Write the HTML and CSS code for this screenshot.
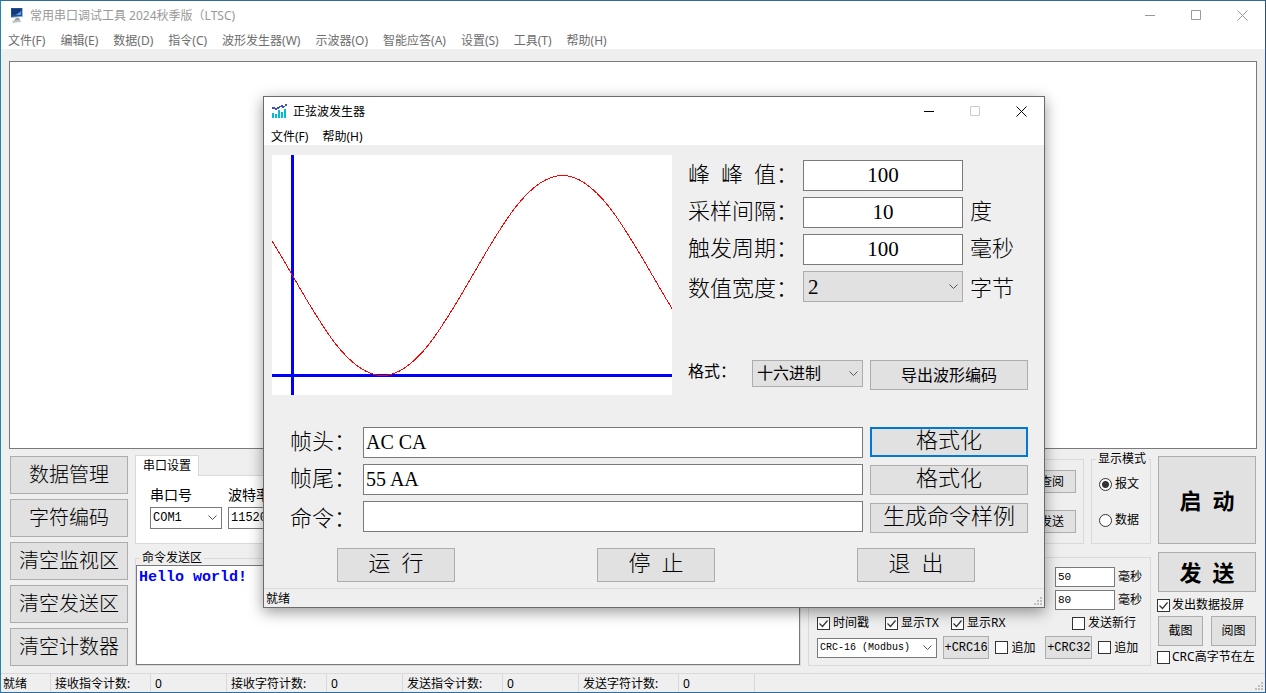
FILE: index.html
```html
<!DOCTYPE html>
<html lang="zh-CN">
<head>
<meta charset="utf-8">
<title>常用串口调试工具</title>
<link rel="stylesheet" href="styles.css">
</head>
<body>
<div class="window">
  <header class="titlebar inactive">
    <svg class="app-icon" width="16" height="16" viewBox="0 0 16 16" aria-hidden="true">
      <path d="M2 0h12v9l-12 1z" fill="#a9bdd2"/>
      <path d="M2 0h11v8l-11 1z" fill="#1f4f96"/>
      <path d="M3 1h9v3l-9 3z" fill="#123a78"/>
      <path d="M7 7l5-4v4z" fill="#5d9be0"/>
      <path d="M7 10h3l2 4H4z" fill="#9aa0a4"/>
      <path d="M3 13l8-1 1 2-8 1z" fill="#c4c8cb"/>
    </svg>
    <h1 class="title">常用串口调试工具 2024秋季版（LTSC)</h1>
    <div class="caption-buttons">
      <button type="button" aria-label="最小化"><svg width="11" height="11" viewBox="0 0 11 11"><path d="M0 5.5h10"/></svg></button>
      <button type="button" aria-label="最大化"><svg width="11" height="11" viewBox="0 0 11 11"><path d="M.5 .5h9v9h-9z"/></svg></button>
      <button type="button" aria-label="关闭"><svg width="11" height="11" viewBox="0 0 11 11"><path d="M.5 .5l10 10M10.500 .5l-10 10"/></svg></button>
    </div>
  </header>
  <nav class="menubar inactive">
    <button type="button">文件(F)</button>
    <button type="button">编辑(E)</button>
    <button type="button">数据(D)</button>
    <button type="button">指令(C)</button>
    <button type="button">波形发生器(W)</button>
    <button type="button">示波器(O)</button>
    <button type="button">智能应答(A)</button>
    <button type="button">设置(S)</button>
    <button type="button">工具(T)</button>
    <button type="button">帮助(H)</button>
  </nav>

  <main class="workspace">
    <div class="monitor"></div>
    <div class="controls">
      <div class="tools">
        <button type="button" class="btn">数据管理</button>
        <button type="button" class="btn">字符编码</button>
        <button type="button" class="btn">清空监视区</button>
        <button type="button" class="btn">清空发送区</button>
        <button type="button" class="btn">清空计数器</button>
      </div>

      <div class="center">
        <div class="center-row">
          <section class="tabs">
            <button type="button" class="tab">串口设置</button>
            <div class="tab-page">
              <div class="field">
                <label for="port">串口号</label>
                <select id="port" class="port"><option>COM1</option></select>
              </div>
              <div class="field">
                <label for="baud">波特率</label>
                <select id="baud" class="port"><option>115200</option></select>
              </div>
            </div>
          </section>
          <fieldset class="group quick">
            <button type="button" class="btn small">查阅</button>
            <button type="button" class="btn small">发送</button>
          </fieldset>
          <fieldset class="group mode">
            <legend>显示模式</legend>
            <label class="check"><input type="radio" name="mode" checked>报文</label>
            <label class="check"><input type="radio" name="mode">数据</label>
          </fieldset>
        </div>

        <div class="center-row">
          <fieldset class="group send">
            <legend>命令发送区</legend>
            <textarea aria-label="命令发送区">Hello world!</textarea>
          </fieldset>
          <fieldset class="group options">
            <div class="delays">
              <label class="delay"><input type="text" value="50">毫秒</label>
              <label class="delay"><input type="text" value="80">毫秒</label>
            </div>
            <div class="flags">
              <label class="check"><input type="checkbox" checked>时间戳</label>
              <label class="check"><input type="checkbox" checked>显示TX</label>
              <label class="check"><input type="checkbox" checked>显示RX</label>
              <label class="check newline"><input type="checkbox">发送新行</label>
            </div>
            <div class="crc">
              <select class="crc-kind" aria-label="校验方式"><option>CRC-16 (Modbus)</option></select>
              <button type="button" class="btn mono">+CRC16</button>
              <label class="check"><input type="checkbox">追加</label>
              <button type="button" class="btn mono">+CRC32</button>
              <label class="check"><input type="checkbox">追加</label>
            </div>
          </fieldset>
        </div>
      </div>

      <div class="actions">
        <button type="button" class="btn strong start">启  动</button>
        <button type="button" class="btn strong">发  送</button>
        <label class="check"><input type="checkbox" checked>发出数据投屏</label>
        <div class="shots">
          <button type="button" class="btn">截图</button>
          <button type="button" class="btn">阅图</button>
        </div>
        <label class="check"><input type="checkbox">CRC高字节在左</label>
      </div>
    </div>
  </main>

  <footer class="statusbar">
    <span class="cell ready">就绪</span>
    <span class="cell name">接收指令计数:</span><span class="cell count">0</span>
    <span class="cell name">接收字符计数:</span><span class="cell count">0</span>
    <span class="cell name">发送指令计数:</span><span class="cell count">0</span>
    <span class="cell name">发送字符计数:</span><span class="cell count">0</span>
    <svg class="grip" width="10" height="10" viewBox="0 0 10 10" aria-hidden="true"><path d="M6 0h2v2h-2zM3 3h2v2h-2zM6 3h2v2h-2zM0 6h2v2h-2zM3 6h2v2h-2zM6 6h2v2h-2z"/></svg>
  </footer>
</div>

<section class="dialog" role="dialog" aria-labelledby="dialog-title">
  <header class="titlebar">
    <svg class="app-icon" width="16" height="16" viewBox="0 0 16 16" aria-hidden="true" shape-rendering="crispEdges">
      <path d="M0 3h3v1h2V3h2V2h2V1h2v1h2V0h2v2h-2v1h-1v1h-2V3h-2v1H7v1H5v1H3V5H0z" fill="#3f51b5"/>
      <path d="M0 9h2v5h-2zM3 10h2v4h-2zM6 6h2v8h-2zM9 8h2v6h-2zM12 5h2v9h-2z" fill="#00bcd4"/>
    </svg>
    <h2 class="title" id="dialog-title">正弦波发生器</h2>
    <div class="caption-buttons">
      <button type="button" aria-label="最小化"><svg width="11" height="11" viewBox="0 0 11 11"><path d="M0 5.5h10"/></svg></button>
      <button type="button" aria-label="最大化" disabled><svg width="11" height="11" viewBox="0 0 11 11"><path d="M.5 .5h9v9h-9z"/></svg></button>
      <button type="button" aria-label="关闭"><svg width="11" height="11" viewBox="0 0 11 11"><path d="M.5 .5l10 10M10.500 .5l-10 10"/></svg></button>
    </div>
  </header>
  <nav class="menubar">
    <button type="button">文件(F)</button>
    <button type="button">帮助(H)</button>
  </nav>

  <div class="dialog-body">
    <div class="wave-row">
      <svg class="plot" width="400" height="240" viewBox="0 0 400 240" role="img" aria-label="波形">
        <path d="M19 0h3v240h-3zM0 219h400v3H0z" fill="#0000ff"/>
        <path class="curve" d="M-70 20.500C-37.400 20.500 -9 69 20.500 120.500C49.800 171.700 77.900 220.500 110.500 220.500C143 220.500 171 171.700 200.500 120.500C229.800 69.300 257.900 20.500 290.500 20.500C323 20.500 351 69.300 380.500 120.500C409.800 171.700 437.900 220.500 470.500 220.500"/>
      </svg>
      <div class="wave-settings">
        <div class="param"><label for="peak">峰  峰  值：</label><input id="peak" type="text" value="100"></div>
        <div class="param"><label for="step">采样间隔：</label><input id="step" type="text" value="10"><span>度</span></div>
        <div class="param"><label for="period">触发周期：</label><input id="period" type="text" value="100"><span>毫秒</span></div>
        <div class="param last"><label for="width">数值宽度：</label><select id="width"><option>2</option></select><span>字节</span></div>
        <div class="format">
          <label for="format">格式：</label>
          <select id="format"><option>十六进制</option></select>
          <button type="button" class="btn">导出波形编码</button>
        </div>
      </div>
    </div>

    <div class="frames">
      <div class="frame-fields">
        <div class="frame"><label for="head">帧头：</label><input id="head" type="text" value="AC CA"></div>
        <div class="frame"><label for="tail">帧尾：</label><input id="tail" type="text" value="55 AA"></div>
        <div class="frame last"><label for="cmd">命令：</label><input id="cmd" type="text" value=""></div>
      </div>
      <div class="frame-buttons">
        <button type="button" class="btn focused">格式化</button>
        <button type="button" class="btn">格式化</button>
        <button type="button" class="btn">生成命令样例</button>
      </div>
    </div>

    <div class="run-row">
      <button type="button" class="btn">运  行</button>
      <button type="button" class="btn">停  止</button>
      <button type="button" class="btn">退  出</button>
    </div>
  </div>

  <footer class="statusbar">
    <span class="cell">就绪</span>
    <svg class="grip" width="10" height="10" viewBox="0 0 10 10" aria-hidden="true"><path d="M6 0h2v2h-2zM3 3h2v2h-2zM6 3h2v2h-2zM0 6h2v2h-2zM3 6h2v2h-2zM6 6h2v2h-2z"/></svg>
  </footer>
</section>
</body>
</html>
```

FILE: styles.css
```css
* { box-sizing: border-box; }

:root {
  --face: #efefef;
  --button: #e1e1e1;
  --edge: #adadad;
  --field-edge: #7a7a7a;
  --line: #d9d9d9;
  --ui: "Noto Sans", "Noto Sans CJK SC", sans-serif;
  --form: "Liberation Serif", "Noto Sans CJK SC", serif;
  --mono: "Liberation Mono", "Noto Sans CJK SC", monospace;
}

body {
  margin: 0;
  color: #000;
  font: 12px/14px var(--ui);
  white-space: nowrap;
}

button, input, select, textarea {
  margin: 0;
  border-radius: 0;
  color: inherit;
  font: inherit;
}

.window {
  display: flex;
  flex-direction: column;
  height: 100vh;
  min-height: 600px;
  border: 1px solid;
  border-color: #2c6c9f #2d4f8e #2c6c9f #2784a8;
  background: var(--face);
}

/* Title bars and menus */
.titlebar {
  display: flex;
  align-items: center;
  gap: 5px;
  height: 29px;
  padding-left: 8px;
  background: #fff;
}
.title { flex: 1; margin: 0; font-size: 12px; font-weight: 400; }
.titlebar.inactive { color: #999; }
.caption-buttons { display: flex; }
.caption-buttons button {
  display: grid;
  place-items: center;
  width: 46px;
  height: 29px;
  padding: 0;
  border: 0;
  background: none;
}
.caption-buttons button:disabled { color: #ccc; }
.caption-buttons svg { fill: none; stroke: currentColor; }

.menubar {
  display: flex;
  gap: 14px;
  height: 19px;
  padding-left: 7px;
  background: #fff;
}
.menubar.inactive { gap: 15px; color: #6d6d6d; }
.menubar button { padding: 3px 0 0; border: 0; background: none; }

/* Shared controls */
.btn {
  padding: 0;
  border: 1px solid var(--edge);
  background: var(--button);
  text-align: center;
  white-space: pre;
}
.btn.focused { border: 2px solid #0078d7; }

input[type="text"], textarea {
  min-width: 0;
  padding: 0 2px;
  border: 1px solid var(--field-edge);
  background: #fff;
  outline: 0;
}

select {
  appearance: none;
  padding: 0 16px 0 2px;
  border: 1px solid var(--field-edge);
  background: #fff url("data:image/svg+xml,%3Csvg xmlns='http://www.w3.org/2000/svg' width='9' height='6'%3E%3Cpath d='M.5.5l4 4 4-4' fill='none' stroke='%23555'/%3E%3C/svg%3E") no-repeat right 4px center;
}

.check { display: flex; align-items: center; gap: 3px; }
.check input {
  appearance: none;
  flex: none;
  width: 13px;
  height: 13px;
  border: 1px solid #333;
  background: #fff center no-repeat;
}
.check input[type="radio"] { border-radius: 50%; }
.check input[type="radio"]:checked { background-image: radial-gradient(circle, #333 3px, transparent 4px); }
.check input[type="checkbox"]:checked {
  background-image: url("data:image/svg+xml,%3Csvg xmlns='http://www.w3.org/2000/svg' width='11' height='11'%3E%3Cpath d='M1.500 5.500l3 3 5-6' fill='none' stroke='%23333' stroke-width='1.200'/%3E%3C/svg%3E");
}

.group {
  min-width: 0;
  margin: 0;
  padding: 0;
  border: 1px solid var(--line);
}
.group legend { margin-left: 4px; padding: 0 2px; }

/* Main area */
.workspace {
  display: flex;
  flex: 1;
  flex-direction: column;
  gap: 3px;
  min-height: 0;
  padding: 12px 8px 7px;
}
.monitor { flex: 1; border: 1px solid var(--field-edge); background: #fff; }

.controls { display: grid; grid-template-columns: 118px 1fr 98px; gap: 7px; padding: 0 1px; }

.tools { display: grid; gap: 5px; padding-top: 4px; align-content: start; }
.tools .btn { height: 38px; font-size: 20px; font-weight: 300; }

.center { display: flex; flex-direction: column; gap: 7px; }
.center-row { display: flex; gap: 7px; }

.tabs { display: flex; flex: 1; flex-direction: column; align-items: stretch; padding-top: 3px; }
.tab {
  align-self: start;
  height: 21px;
  margin-bottom: -1px;
  padding: 0 7px;
  border: 1px solid var(--line);
  border-bottom: 0;
  background: #fff;
  position: relative;
}
.tab-page { display: flex; gap: 6px; height: 69px; padding: 12px 14px; border: 1px solid var(--line); background: #fff; }
.field { display: grid; align-content: start; gap: 5px; font-size: 14px; }
.port { width: 72px; height: 22px; font: 12px var(--mono); }

.quick { display: flex; flex-direction: column; align-items: end; gap: 17px; width: 200px; margin-top: 7px; padding: 10px 7px; }
.small { width: 48px; height: 23px; }
.mode { width: 60px; }
.mode .check { padding: 11px 7px; }

.send { flex: 1; }
.send textarea {
  display: block;
  width: 100%;
  height: 100px;
  padding-top: 2px;
  color: #0000ff;
  font: bold 15px/20px var(--mono);
  resize: none;
}
.options { width: 343px; margin-top: 6px; padding: 9px 8px 0; }
.delays { display: grid; justify-content: end; gap: 3px; }
.delay { display: flex; align-items: center; gap: 3px; }
.delay input { width: 60px; height: 20px; font: 11px var(--mono); }
.flags { display: grid; grid-template-columns: 68px 66px 1fr auto; padding: 6px 6px 6px 0; }
.crc { display: flex; align-items: center; gap: 6px; }
.crc .check { width: 44px; }
.crc .crc-kind { width: 120px; height: 20px; font: 10px var(--mono); }
.mono { width: 47px; height: 23px; font: 12px var(--mono); }

.actions { display: flex; flex-direction: column; gap: 4px; padding-top: 4px; }
.actions .check { gap: 2px; margin-left: -1px; }
.strong { height: 40px; margin-bottom: 2px; padding-bottom: 2px; font: bold 22px var(--form); }
.start { height: 88px; margin-bottom: 4px; }
.shots { display: grid; grid-template-columns: 1fr 1fr; gap: 8px; }
.shots .btn { height: 30px; }

/* Status bars */
.statusbar { display: flex; height: 19px; padding-left: 2px; border-top: 1px solid var(--line); }
.cell { padding-top: 3px; }
.ready { width: 48px; border-right: 1px solid var(--line); }
.name { width: 100px; padding-left: 4px; border-right: 1px solid var(--line); }
.count { width: 76px; padding-left: 4px; border-right: 1px solid var(--line); }
.grip { align-self: end; margin-left: auto; fill: #bfbfbf; }

/* Waveform dialog */
.dialog {
  position: absolute;
  top: 96px;
  left: 263px;
  width: 782px;
  border: 1px solid #6b6b6b;
  background: var(--face);
  box-shadow: 0 4px 14px rgba(0, 0, 0, 0.4);
}
.dialog-body { padding: 10px 16px 6px 8px; font: 300 22px/30px var(--form); }
.dialog-body label, .dialog-body span { white-space: pre; }
.wave-row { display: flex; gap: 16px; }
.plot { flex: none; background: #fff; }
.curve { fill: none; stroke: #ff0000; shape-rendering: crispEdges; }

.wave-settings { display: flex; flex: 1; flex-direction: column; gap: 6px; padding-top: 5px; }
.param { display: grid; grid-template-columns: 115px 160px 1fr; height: 31px; }
.param input { text-align: center; }
.param input, .param select { height: 31px; font-size: 21px; font-weight: 400; line-height: 28px; }
.param span { padding-left: 7px; }
.last { line-height: 36px; }
.dialog-body select { padding-left: 4px; border-color: var(--edge); background-color: var(--button); }
.format {
  display: grid;
  grid-template-columns: 64px 111px 158px;
  align-items: start;
  margin-top: auto;
  padding-bottom: 5px;
  font-size: 16px;
  font-weight: 400;
}
.format label { line-height: 24px; }
.format select { height: 27px; line-height: 24px; }
.format .btn { width: 158px; height: 30px; margin-left: 7px; }

.frames { display: flex; gap: 7px; padding: 32px 0 15px 18px; }
.frame-fields { display: grid; flex: 1; gap: 6px; align-content: start; }
.frame { display: grid; grid-template-columns: 73px 1fr; height: 31px; }
.frame input { height: 31px; font-size: 20px; font-weight: 400; }
.frame-buttons { display: grid; gap: 8px; align-content: start; width: 158px; }
.frame-buttons .btn { height: 30px; padding-bottom: 3px; line-height: 24px; }

.run-row { display: flex; gap: 142px; padding-left: 65px; }
.run-row .btn { width: 118px; height: 34px; padding-bottom: 2px; }
```
